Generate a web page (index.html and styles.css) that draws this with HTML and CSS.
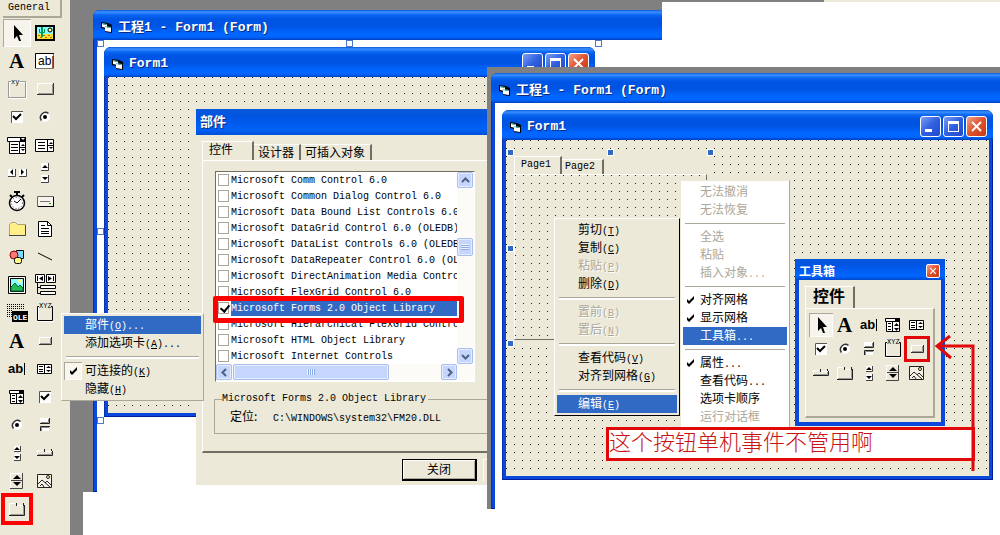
FILE: index.html
```html
<!DOCTYPE html>
<html lang="zh-CN">
<head>
<meta charset="utf-8">
<title>工程1 - Form1 (Form)</title>
<meta name="viewport" content="width=device-width">
<link rel="stylesheet" href="styles.css">
</head>
<body>
<svg class="sprite" aria-hidden="true">
	<symbol id="arrow" viewBox="0 0 24 24"><path d="M9 4v14l3-3 2 5h2l-2-6h4z"/></symbol>
	<symbol id="picture" viewBox="0 0 24 24"><path d="M2 4h20v16H2z"/><path fill="#8ff" d="M4 6h16v7H4z"/><path fill="#fd3" d="M4 13h16v5H4z"/><circle cx="17" cy="9" r="2" fill="#ff9" stroke="#000"/><path fill="none" stroke="#095" stroke-width="2" d="M9 6v10"/><path fill="none" stroke="#095" d="M6.5 8v3.5h5V8"/><path stroke="#a70" stroke-dasharray="2 3" d="M5 14.5h15M7 16.5h13"/></symbol>
	<symbol id="label" viewBox="0 0 24 24"><text x="4" y="19" class="glyph-serif">A</text></symbol>
	<symbol id="textbox" viewBox="0 0 24 24"><path fill="#fff" stroke="#777" d="M2.5 4.5h18v15h-18z"/><path fill="none" stroke="#000" d="M2.5 19V4.5H21"/><text x="5" y="16" class="glyph-ab">ab|</text></symbol>
	<symbol id="frame" viewBox="0 0 24 24"><path fill="none" stroke="#fff" d="M4.5 5.5h17v16h-17z"/><path fill="none" stroke="#999" d="M6 4.5H3.5v16h17v-16H15"/><text x="6" y="7" class="glyph-tiny">xy</text></symbol>
	<symbol id="button" viewBox="0 0 24 24"><path fill="#fff" d="M4 6h16v12H4z"/><path fill="#ece9d8" d="M5 7h14v10H5z"/><path fill="none" stroke="#999" d="M5 16.5h14.5V7"/><path fill="none" stroke="#333" d="M4 17.5h16.5V6"/></symbol>
	<symbol id="check" viewBox="0 0 24 24"><path fill="#fff" d="M6 6h12v12H6z"/><path fill="none" stroke="#555" d="M6.5 18V6.5H18"/><path fill="none" stroke="#000" stroke-width="2" d="M8 11l3 3 5-5"/></symbol>
	<symbol id="radio" viewBox="0 0 24 24"><circle cx="12" cy="12" r="5" fill="#fff"/><path fill="none" stroke="#333" stroke-width="1.5" d="M8.5 15.5a5 5 0 0 1 7-7"/><circle cx="12" cy="12" r="2"/></symbol>
	<symbol id="combo" viewBox="0 0 24 24"><path fill="#fff" stroke="#000" d="M2.5 4.5h18v4h-18zM4.500 8.5h16v12h-16z"/><path d="M15 4h6v4h-6z"/><path fill="#fff" d="M16 5h4l-2 2z"/><path stroke="#000" d="M6 11.5h7M6 14.5h7M6 17.5h7M14.5 9v12M15 14.5h6"/><path d="M16 13h4l-2-2zM16 16h4l-2 2z"/></symbol>
	<symbol id="list" viewBox="0 0 24 24"><path fill="#fff" stroke="#000" d="M2.5 6.5h18v12h-18z"/><path stroke="#000" d="M5 9.5h7M5 12.5h7M5 15.5h7M14.5 7v12M15 12.5h6"/><path d="M16 11h4l-2-2zM16 14h4l-2 2z"/></symbol>
	<symbol id="hscroll" viewBox="0 0 24 24"><path fill="#fff" d="M3 8h7v7H3zM14 8h7v7h-7z"/><path fill="none" stroke="#444" d="M10.5 8v7.5H3M21.5 8v7.5H14"/><path d="M8 8v6l-3-3zM16 8v6l3-3z"/></symbol>
	<symbol id="vscroll" viewBox="0 0 24 24"><path fill="#fff" d="M8 2h7v7H8zM8 14h7v7H8z"/><path fill="none" stroke="#444" d="M15.5 2v7.5H8M15.5 14v7.5H8"/><path d="M9 7h6l-3-3zM9 16h6l-3 3z"/></symbol>
	<symbol id="timer" viewBox="0 0 24 24"><circle cx="12" cy="14" r="7.5" fill="#fff" stroke="#000" stroke-width="1.5"/><path fill="none" stroke="#000" stroke-width="2" d="M9 3h6M12 3v4M5 6l2 2M19 6l-2 2"/><path fill="none" stroke="#000" d="M12 14l4-4M12 14l-3-2"/><circle cx="12" cy="14" r="5.5" fill="none" stroke="#444" stroke-dasharray="1 2"/></symbol>
	<symbol id="drive" viewBox="0 0 24 24"><path fill="#f6f4ea" stroke="#666" d="M4.5 7.5h16v10h-16z"/><path stroke="#000" d="M5 17.5h16M20.5 8v10"/><path stroke="#777" d="M7 12.5h10"/><path stroke="#0a0" d="M16 14.5h2"/></symbol>
	<symbol id="folder" viewBox="0 0 24 24"><path fill="#ffef86" stroke="#aaa178" d="M4.5 18.5v-11l2-2h4l2 2h8v11z"/><path fill="none" stroke="#444" d="M4 18.5h16.5V8"/></symbol>
	<symbol id="file" viewBox="0 0 24 24"><path fill="#fff" stroke="#000" d="M5.5 4.5h9l4 4v11h-13z"/><path fill="none" stroke="#000" d="M14.5 4v4.5H19M8 8.5h4M8 11.5h8M8 14.5h8M8 16.5h8"/></symbol>
	<symbol id="shape" viewBox="0 0 24 24"><path fill="#7df" stroke="#000" d="M11.5 5.5h7v8h-7z"/><circle cx="9" cy="10" r="4" fill="#f77" stroke="#800"/><rect x="9.5" y="12.5" width="7" height="6" rx="2" fill="#ff8" stroke="#000"/></symbol>
	<symbol id="line" viewBox="0 0 24 24"><path stroke="#000" d="M5 8l14 7"/></symbol>
	<symbol id="image" viewBox="0 0 24 24"><path fill="#fff" stroke="#000" d="M3.5 3.5h17v17h-17z"/><path fill="#8ff" stroke="#000" d="M5.5 5.5h13v13h-13z"/><path fill="#2b5" stroke="#063" d="M6 18v-4l4-4 3 4 2-2 3 3v3z"/><circle cx="15" cy="8" r="2" fill="#ff8"/></symbol>
	<symbol id="data" viewBox="0 0 24 24"><path fill="#fff" stroke="#000" d="M2.5 1.5h9v8h-9zM13.5 1.5h9v8h-9zM7.5 12.5h15v3h-15zM7.5 18.5h15v3h-15z"/><path fill="none" stroke="#000" d="M4.5 3v5M20.5 3v5M4.5 10v10.5H7M4.5 14.5H7"/><path d="M10 3v5L6 5.5zM15 3v5l4-2.5z"/></symbol>
	<symbol id="ole" viewBox="0 0 24 24"><path fill="none" stroke="#000" stroke-dasharray="1 1" d="M2 3.5h17M2 5.5h17M2 7.5h17M2 9.5h5M2 11.5h5M2 13.5h5M2 15.5h5"/><path d="M7 10h16v11H7z"/><text x="8" y="19" class="glyph-ole">OLE</text></symbol>
	<symbol id="xyz" viewBox="0 0 24 24"><path fill="none" stroke="#fff" d="M5.5 6v14M4 20.5h17"/><path fill="none" stroke="#000" d="M6 5.5H4.5v14h15v-14H18"/><text x="6" y="7" class="glyph-tiny">XYZ</text></symbol>
	<symbol id="btn" viewBox="0 0 24 24"><path fill="#fff" d="M6 8h12v8H6z"/><path fill="#ece9d8" d="M7 9h11v6H7z"/><path fill="none" stroke="#999" d="M7 14.5h10.5V9"/><path fill="none" stroke="#333" d="M6 15.5h12.5V8"/></symbol>
	<symbol id="ab" viewBox="0 0 24 24"><text x="3" y="16" class="glyph-abb">ab</text><path stroke="#000" d="M19.5 6v12"/></symbol>
	<symbol id="mlist" viewBox="0 0 24 24"><path fill="#fff" stroke="#000" d="M4.5 7.5h14v9h-14z"/><path stroke="#000" d="M6 9.5h4M6 12.5h4M6 14.5h4M11.5 8v9"/><path d="M13 11h5l-2.5-2zM13 13h5l-2.5 2z"/></symbol>
	<symbol id="mcombo" viewBox="0 0 24 24"><path fill="#fff" stroke="#000" d="M4.5 5.5h14v3h-14zM5.5 8.5h13v10h-13z"/><path d="M14 5h5v3h-5z"/><path stroke="#000" d="M7 10.5h3M7 13.5h3M7 16.5h3M11.5 9v9"/><path d="M13 13h5l-2.5-3zM13 15h5l-2.5 3z"/></symbol>
	<symbol id="toggle" viewBox="0 0 24 24"><path fill="#fff" d="M7 5h9v5H7zM7 13h9v5H7z"/><path fill="none" stroke="#222" d="M7 10.5h9.5V5M7.5 18v-4.500H17"/><path fill="none" stroke="#888" d="M8 9.5h7.5V6M8.5 18v-3.500H16"/></symbol>
	<symbol id="mscroll" viewBox="0 0 24 24"><path fill="#fff" d="M9 5h6v6H9zM9 13h6v6H9z"/><path fill="none" stroke="#444" d="M15.5 5v5.5H9M15.5 13v6.5H9"/><path d="M9 9h6l-3-3zM9 15h6l-3 3z"/></symbol>
	<symbol id="tabstrip" viewBox="0 0 24 24"><path fill="none" stroke="#fff" d="M4.5 14V9.5h6M12.5 10.5h6"/><path fill="none" stroke="#999" d="M5 13.5h13.5V11"/><path fill="none" stroke="#222" d="M4 14.5h15.5V10M11.5 8v3M18.5 8v2"/></symbol>
	<symbol id="spin" viewBox="0 0 24 24"><path fill="#fff" d="M5 4h12v15H5z"/><path fill="#ece9d8" d="M6 5h11v14H6z"/><path fill="none" stroke="#444" d="M5 19.5h12.5V4M6 11.5h11"/><path d="M8 10h8l-4-4zM8 13h8l-4 4z"/></symbol>
	<symbol id="mimage" viewBox="0 0 24 24"><path fill="#f4f2e6" stroke="#222" d="M4.5 5.5h14v13h-14z"/><path fill="none" stroke="#222" d="M5 15l4-4 8 7M12 14l2-2 4 4M7 17l2-2 2 3"/><circle cx="15" cy="8" r="1.5" fill="#ff8" stroke="#222"/></symbol>
	<symbol id="multipage" viewBox="0 0 24 24"><path fill="none" stroke="#fff" d="M4.5 18V6.5h6M12.5 8.5h6"/><path fill="none" stroke="#999" d="M5 17.5h13.5V9"/><path fill="none" stroke="#222" d="M4 18.5h15.5V8M11.5 6v3M18.5 6v3"/></symbol>
	<symbol id="vb" viewBox="0 0 12 12"><path fill="#000" d="M0 1l7 1 4 2v8l-7-1V8L0 7z"/><path fill="#fff" d="M1 3l5 1v3L1 6zM4 6l6 1v4l-6-1z"/><path fill="#5cc" d="M1 2l5 1v1L1 3zM4 5l6 1v1L4 6z"/></symbol>
	<symbol id="tick" viewBox="0 0 9 9"><path d="M1 3v3l2 2 5-5V0L3 5z"/></symbol>
	<symbol id="up" viewBox="0 0 9 9"><path fill="none" stroke="#4d6185" stroke-width="2" d="M1 6l3.5-3.500L8 6"/></symbol>
	<symbol id="down" viewBox="0 0 9 9"><path fill="none" stroke="#4d6185" stroke-width="2" d="M1 3l3.5 3.500L8 3"/></symbol>
	<symbol id="left" viewBox="0 0 9 9"><path fill="none" stroke="#4d6185" stroke-width="2" d="M6 1L2.5 4.500 6 8"/></symbol>
	<symbol id="right" viewBox="0 0 9 9"><path fill="none" stroke="#4d6185" stroke-width="2" d="M3 1l3.5 3.500L3 8"/></symbol>
	<symbol id="min" viewBox="0 0 19 19"><path fill="#fff" d="M4 12h7v3H4z"/></symbol>
	<symbol id="max" viewBox="0 0 19 19"><path fill="#fff" fill-rule="evenodd" d="M4 4h11v11H4zM5 7v7h9V7z"/></symbol>
	<symbol id="close" viewBox="0 0 19 19"><path fill="none" stroke="#fff" stroke-width="2" d="M5 5l9 9M14 5l-9 9"/></symbol>
</svg>

<main class="desktop">
	<div class="strip"><span></span></div>
	<div class="mdi"></div>

	<aside class="palette">
		<button class="general">General</button>
		<div class="tools">
			<button class="on" aria-label="Pointer"><svg><use href="#arrow"/></svg></button>
			<button aria-label="PictureBox"><svg><use href="#picture"/></svg></button>
			<button aria-label="Label"><svg><use href="#label"/></svg></button>
			<button aria-label="TextBox"><svg><use href="#textbox"/></svg></button>
			<button aria-label="Frame"><svg><use href="#frame"/></svg></button>
			<button aria-label="CommandButton"><svg><use href="#button"/></svg></button>
			<button aria-label="CheckBox"><svg><use href="#check"/></svg></button>
			<button aria-label="OptionButton"><svg><use href="#radio"/></svg></button>
			<button aria-label="ComboBox"><svg><use href="#combo"/></svg></button>
			<button aria-label="ListBox"><svg><use href="#list"/></svg></button>
			<button aria-label="HScrollBar"><svg><use href="#hscroll"/></svg></button>
			<button aria-label="VScrollBar"><svg><use href="#vscroll"/></svg></button>
			<button aria-label="Timer"><svg><use href="#timer"/></svg></button>
			<button aria-label="DriveListBox"><svg><use href="#drive"/></svg></button>
			<button aria-label="DirListBox"><svg><use href="#folder"/></svg></button>
			<button aria-label="FileListBox"><svg><use href="#file"/></svg></button>
			<button aria-label="Shape"><svg><use href="#shape"/></svg></button>
			<button aria-label="Line"><svg><use href="#line"/></svg></button>
			<button aria-label="Image"><svg><use href="#image"/></svg></button>
			<button aria-label="Data"><svg><use href="#data"/></svg></button>
			<button aria-label="OLE"><svg><use href="#ole"/></svg></button>
			<button aria-label="Forms Frame"><svg><use href="#xyz"/></svg></button>
			<button aria-label="Forms Label"><svg><use href="#label"/></svg></button>
			<button aria-label="Forms CommandButton"><svg><use href="#btn"/></svg></button>
			<button aria-label="Forms TextBox"><svg><use href="#ab"/></svg></button>
			<button aria-label="Forms ListBox"><svg><use href="#mlist"/></svg></button>
			<button aria-label="Forms ComboBox"><svg><use href="#mcombo"/></svg></button>
			<button aria-label="Forms CheckBox"><svg><use href="#check"/></svg></button>
			<button aria-label="Forms OptionButton"><svg><use href="#radio"/></svg></button>
			<button aria-label="Forms ToggleButton"><svg><use href="#toggle"/></svg></button>
			<button aria-label="Forms ScrollBar"><svg><use href="#mscroll"/></svg></button>
			<button aria-label="Forms TabStrip"><svg><use href="#tabstrip"/></svg></button>
			<button aria-label="Forms SpinButton"><svg><use href="#spin"/></svg></button>
			<button aria-label="Forms Image"><svg><use href="#mimage"/></svg></button>
			<button class="marked" aria-label="Forms MultiPage"><svg><use href="#multipage"/></svg></button>
		</div>
	</aside>

	<section class="window project-a">
		<header class="titlebar"><svg><use href="#vb"/></svg><h2><span class="cn">工程</span>1 - Form1 (Form)</h2></header>
		<div class="client"></div>
	</section>
	<section class="window form-a">
		<header class="titlebar">
			<svg><use href="#vb"/></svg><h2>Form1</h2>
			<button class="ctl" aria-label="最小化"><svg><use href="#min"/></svg></button>
			<button class="ctl" aria-label="最大化"><svg><use href="#max"/></svg></button>
			<button class="ctl red" aria-label="关闭窗体"><svg><use href="#close"/></svg></button>
		</header>
		<div class="client dots"></div>
		<i class="grip a1"></i><i class="grip a2"></i><i class="grip a3"></i><i class="grip a4"></i><i class="grip a5"></i>
	</section>

	<section class="dialog">
		<header class="caption">部件</header>
		<div class="dialog-body">
			<nav class="tabs">
				<button class="tab active">控件</button>
				<button class="tab">设计器</button>
				<button class="tab">可插入对象</button>
			</nav>
			<div class="sheet">
				<div class="listbox">
					<div class="rows">
						<label><input type="checkbox"><span>Microsoft Comm Control 6.0</span></label>
						<label><input type="checkbox"><span>Microsoft Common Dialog Control 6.0</span></label>
						<label><input type="checkbox"><span>Microsoft Data Bound List Controls 6.0</span></label>
						<label><input type="checkbox"><span>Microsoft DataGrid Control 6.0 (OLEDB)</span></label>
						<label><input type="checkbox"><span>Microsoft DataList Controls 6.0 (OLEDB)</span></label>
						<label><input type="checkbox"><span>Microsoft DataRepeater Control 6.0 (OLEDB)</span></label>
						<label><input type="checkbox"><span>Microsoft DirectAnimation Media Controls</span></label>
						<label><input type="checkbox"><span>Microsoft FlexGrid Control 6.0</span></label>
						<label class="selected"><input type="checkbox" checked><span>Microsoft Forms 2.0 Object Library</span></label>
						<label><input type="checkbox"><span>Microsoft Hierarchical FlexGrid Control</span></label>
						<label><input type="checkbox"><span>Microsoft HTML Object Library</span></label>
						<label><input type="checkbox"><span>Microsoft Internet Controls</span></label>
					</div>
					<div class="vbar">
						<button aria-label="向上"><svg><use href="#up"/></svg></button>
						<div class="thumb"></div>
						<button aria-label="向下"><svg><use href="#down"/></svg></button>
					</div>
					<div class="hbar">
						<button aria-label="向左"><svg><use href="#left"/></svg></button>
						<div class="thumb"></div>
						<button aria-label="向右"><svg><use href="#right"/></svg></button>
					</div>
				</div>
				<fieldset>
					<legend>Microsoft Forms 2.0 Object Library</legend>
					<span class="cn">定位:</span><span>C:\WINDOWS\system32\FM20.DLL</span>
				</fieldset>
			</div>
			<footer><button class="push">关闭</button><i class="next"></i></footer>
		</div>
		<i class="mark mark-row"></i>
	</section>

	<ul class="menu menu-palette">
		<li><button class="hot">部件<span>(<u>O</u>)...</span></button></li>
		<li><button>添加选项卡<span>(<u>A</u>)...</span></button></li>
		<li class="sep"></li>
		<li><button><i class="boxed"><svg><use href="#tick"/></svg></i>可连接的<span>(<u>K</u>)</span></button></li>
		<li><button>隐藏<span>(<u>H</u>)</span></button></li>
	</ul>

	<div class="backdrop"></div>
	<section class="window project-b">
		<header class="titlebar"><svg><use href="#vb"/></svg><h2><span class="cn">工程</span>1 - Form1 (Form)</h2></header>
		<div class="client"></div>
	</section>
	<section class="window form-b">
		<header class="titlebar">
			<svg><use href="#vb"/></svg><h2>Form1</h2>
			<button class="ctl" aria-label="最小化"><svg><use href="#min"/></svg></button>
			<button class="ctl" aria-label="最大化"><svg><use href="#max"/></svg></button>
			<button class="ctl red" aria-label="关闭窗体"><svg><use href="#close"/></svg></button>
		</header>
		<div class="client dots">
			<div class="multipage">
				<nav class="tabs">
					<button class="tab active">Page1</button>
					<button class="tab">Page2</button>
				</nav>
				<div class="page dots"></div>
				<i class="knob b1"></i><i class="knob b2"></i><i class="knob b3"></i><i class="knob b4"></i><i class="knob b5"></i>
			</div>
		</div>
	</section>

	<ul class="menu menu-control">
		<li><button>剪切<span>(<u>T</u>)</span></button></li>
		<li><button>复制<span>(<u>C</u>)</span></button></li>
		<li><button disabled>粘贴<span>(<u>P</u>)</span></button></li>
		<li><button>删除<span>(<u>D</u>)</span></button></li>
		<li class="sep"></li>
		<li><button disabled>置前<span>(<u>B</u>)</span></button></li>
		<li><button disabled>置后<span>(<u>N</u>)</span></button></li>
		<li class="sep"></li>
		<li><button>查看代码<span>(<u>V</u>)</span></button></li>
		<li><button>对齐到网格<span>(<u>G</u>)</span></button></li>
		<li class="sep"></li>
		<li><button class="hot">编辑<span>(<u>E</u>)</span></button></li>
	</ul>

	<ul class="menu menu-edit">
		<li><button disabled>无法撤消</button></li>
		<li><button disabled>无法恢复</button></li>
		<li class="sep"></li>
		<li><button disabled>全选</button></li>
		<li><button disabled>粘贴</button></li>
		<li><button disabled>插入对象<span>...</span></button></li>
		<li class="sep"></li>
		<li><button><i><svg><use href="#tick"/></svg></i>对齐网格</button></li>
		<li><button><i><svg><use href="#tick"/></svg></i>显示网格</button></li>
		<li><button class="hot">工具箱<span>...</span></button></li>
		<li class="sep"></li>
		<li><button><i><svg><use href="#tick"/></svg></i>属性<span>...</span></button></li>
		<li><button>查看代码<span>...</span></button></li>
		<li><button>选项卡顺序</button></li>
		<li><button disabled>运行对话框</button></li>
	</ul>

	<section class="toolbox">
		<header>工具箱<button class="ctl red small" aria-label="关闭工具箱"><svg><use href="#close"/></svg></button></header>
		<div class="toolbox-body">
			<button class="tab active">控件</button>
			<div class="tools">
				<button class="on" aria-label="选定对象"><svg><use href="#arrow"/></svg></button>
				<button aria-label="标签"><svg><use href="#label"/></svg></button>
				<button aria-label="文本框"><svg><use href="#ab"/></svg></button>
				<button aria-label="复合框"><svg><use href="#mcombo"/></svg></button>
				<button aria-label="列表框"><svg><use href="#mlist"/></svg></button>
				<button aria-label="复选框"><svg><use href="#check"/></svg></button>
				<button aria-label="选项按钮"><svg><use href="#radio"/></svg></button>
				<button aria-label="切换按钮"><svg><use href="#toggle"/></svg></button>
				<button aria-label="框架"><svg><use href="#xyz"/></svg></button>
				<button class="marked" aria-label="命令按钮"><svg><use href="#btn"/></svg></button>
				<button aria-label="TabStrip"><svg><use href="#tabstrip"/></svg></button>
				<button aria-label="多页"><svg><use href="#multipage"/></svg></button>
				<button aria-label="滚动条"><svg><use href="#mscroll"/></svg></button>
				<button aria-label="旋转按钮"><svg><use href="#spin"/></svg></button>
				<button aria-label="图像"><svg><use href="#mimage"/></svg></button>
			</div>
		</div>
	</section>

	<p class="note">这个按钮单机事件不管用啊</p>
	<svg class="pointer" viewBox="0 0 42 138" aria-hidden="true"><path d="M2 11h36v125M15 1L2 11l14 12"/></svg>
</main>
</body>
</html>
```
FILE: styles.css
```css
:root {
	--face:#ece9d8;
	--shade:#aca899;
	--dark:#716f64;
	--blue:#0a48dc;
	--hot:#316ac5;
	--red:#e00808;
	--cn:"Noto Sans CJK SC", sans-serif;
	--mono:"Liberation Mono", "Noto Sans CJK SC", monospace;
}
* {
	box-sizing:border-box;
}
body {
	margin:0;
	background:#fff;
	color:#000;
	font:12px/18px var(--cn);
	overflow:hidden;
}
button {
	margin:0;
	padding:0;
	border:0;
	background:none;
	color:inherit;
	font:inherit;
}
ul {
	margin:0;
	padding:0;
	list-style:none;
}
.sprite {
	display:none;
}
.glyph-serif {
	font:bold 21px "Liberation Serif", serif;
}
.glyph-ab {
	font:12px "Liberation Sans", sans-serif;
}
.glyph-abb {
	font:bold 13px "Liberation Sans", sans-serif;
}
.glyph-tiny {
	font:7px "Liberation Mono", monospace;
}
.glyph-ole {
	font:bold 8px "Liberation Mono", monospace;
	fill:#fff;
}
.desktop {
	position:relative;
	min-height:100vh;
}
.strip {
	position:absolute;
	top:0;
	left:0;
	right:0;
	height:2px;
	background:var(--face);
}
.strip span {
	display:block;
	width:824px;
	height:2px;
	background:#808080;
}
.mdi {
	position:absolute;
	top:0;
	left:70px;
	width:592px;
	height:492px;
	background:#808080;
}

/* toolbox on the left */
.palette {
	position:absolute;
	top:0;
	bottom:0;
	left:0;
	width:83px;
	padding-left:3px;
	background:var(--face);
	border-right:13px solid #808080;
}
.general {
	display:block;
	width:59px;
	height:18px;
	padding-right:5px;
	border-right:2px solid var(--shade);
	border-bottom:2px solid var(--shade);
	font:10px/16px var(--mono);
}
.tools {
	display:grid;
}
.palette .tools {
	margin-top:1px;
	grid-template-columns:28px 28px;
	grid-auto-rows:28px;
}
.tools button {
	display:grid;
	place-items:center;
}
.tools svg {
	width:24px;
	height:24px;
}
.on {
	background:#f6f4ec;
	box-shadow:inset 1px 1px var(--shade), inset -1px -1px #fff;
}
.palette .marked {
	outline:4px solid #f00;
	outline-offset:-2px;
}

/* windows */
.window {
	position:absolute;
	display:flex;
	flex-direction:column;
	padding:0 4px 4px;
	background:var(--blue);
	box-shadow:inset 1px 0 #0831b0, inset -1px -1px #001f9c;
	border-radius:7px 7px 0 0;
}
.titlebar {
	display:flex;
	align-items:center;
	flex:none;
	gap:2px;
	height:30px;
	margin:0 -4px;
	padding:3px 6px 0 8px;
	background:linear-gradient(#0a58d8, #3a90ff 2px, #0a66f2 5px, #0054e3 9px, #0054e3 16px, #0066ff 23px, #0066ff 27px, #0040c0);
	border-radius:7px 7px 0 0;
	color:#fff;
}
.titlebar > svg {
	width:12px;
	height:12px;
	margin-right:3px;
}
.titlebar h2 {
	flex:1;
	margin:0;
	font:bold 13px/20px var(--mono);
	text-shadow:1px 1px #0a2a80;
	white-space:nowrap;
}
.client {
	flex:1;
	background:#fff;
}
.dots {
	background:conic-gradient(from 90deg at 7px 7px, #222 90deg, var(--face) 0) 1px 1px/8px 8px;
}
.ctl {
	width:21px;
	height:21px;
	border:1px solid #fff;
	border-radius:3px;
	background:linear-gradient(135deg, #7d9df5, #2f5fe0 50%, #2448cc);
}
.ctl svg {
	display:block;
	width:100%;
	height:100%;
}
.ctl.red {
	background:linear-gradient(135deg, #f0a08c, #e0512c 50%, #c83a12);
}
.ctl.small {
	width:14px;
	height:14px;
	border-radius:2px;
}
.project-a {
	top:10px;
	left:93px;
	width:569px;
	height:482px;
	padding:0 0 0 4px;
	border-top-right-radius:0;
}
.project-a .titlebar {
	margin-right:0;
	border-top-right-radius:0;
}
.form-a {
	top:47px;
	left:104px;
	width:491px;
	height:370px;
}
.backdrop {
	position:absolute;
	top:67px;
	left:487px;
	right:0;
	height:442px;
	background:linear-gradient(#808080 12px, transparent 0), linear-gradient(90deg, #808080 12px, #fff 0);
}
.project-b {
	top:73px;
	left:491px;
	right:0;
	height:436px;
	padding:0 0 0 4px;
	border-top-right-radius:0;
}
.project-b .titlebar {
	margin-right:0;
	border-top-right-radius:0;
}
.form-b {
	top:110px;
	left:502px;
	right:7px;
	height:370px;
}

/* selection grips round the form */
.grip {
	position:absolute;
	width:7px;
	height:7px;
	background:#fff;
	border:1px solid #4a7ac8;
}
.a1 { top:-7px; left:-7px; }
.a2 { top:-7px; left:242px; }
.a3 { top:-7px; right:-7px; }
.a4 { top:181px; left:-7px; }
.a5 { bottom:-7px; left:-7px; }
.knob {
	position:absolute;
	width:7px;
	height:7px;
	background:var(--hot);
	border:1px solid #fff;
}
.b1 { top:-3px; left:-3px; }
.b2 { top:-3px; left:97px; }
.b3 { top:-3px; right:-3px; }
.b4 { top:93px; left:-3px; }
.b5 { bottom:-3px; left:-3px; }

/* tabs */
.tabs {
	display:flex;
	align-items:flex-end;
}
.tab {
	height:16px;
	padding:0 6px;
	border-top:1px solid #fff;
	border-right:2px solid var(--dark);
	line-height:14px;
	white-space:nowrap;
}
.tab.active {
	border-left:1px solid #fff;
	text-align:left;
}

/* components dialog */
.dialog {
	position:absolute;
	top:109px;
	left:196px;
	width:291px;
	background:var(--face);
	overflow:hidden;
}
.caption {
	height:26px;
	padding-left:4px;
	background:linear-gradient(#0a58d8, #0054e3 8px, #0062f8 20px, #0050d8);
	color:#fff;
	font:bold 13px/24px var(--cn);
	text-shadow:1px 1px #0a2a80;
}
.dialog-body {
	padding:6px 0 4px 6px;
}
.dialog .tab {
	padding:0 5px 2px 4px;
}
.dialog .tab.active {
	width:52px;
	height:19px;
	padding:0 6px 4px;
}
.sheet {
	height:293px;
	padding:10px 0 0 12px;
	border:solid;
	border-width:1px 0 2px 1px;
	border-color:#fff #fff var(--dark) #fff;
}
.listbox {
	display:grid;
	grid-template:192px 17px / 1fr 17px;
	width:260px;
	border:1px solid var(--dark);
	border-right-color:#fff;
	border-bottom-color:#fff;
	background:#fcfbf8;
}
.rows {
	overflow:hidden;
	background:#fff;
}
.rows label {
	display:flex;
	align-items:center;
	height:16px;
	padding-left:2px;
	font:10px/15px var(--mono);
	white-space:nowrap;
}
.rows input {
	flex:none;
	appearance:none;
	position:relative;
	width:11px;
	height:12px;
	margin:0 2px 0 0;
	border:1px solid #a8a698;
	background:#fff;
}
.rows input:checked:after {
	content:'';
	position:absolute;
	top:0;
	left:3px;
	width:4px;
	height:7px;
	border:solid #000;
	border-width:0 2px 2px 0;
	transform:rotate(40deg);
}
.rows span {
	flex:1;
	padding-top:1px;
}
.selected span {
	background:var(--hot);
	color:#fff;
}
.vbar,
.hbar {
	display:flex;
	justify-content:space-between;
}
.vbar {
	flex-direction:column;
}
.vbar button,
.hbar button,
.thumb {
	display:grid;
	place-items:center;
	width:16px;
	height:16px;
	border:1px solid #a9bfee;
	border-radius:2px;
	background:#c6d5fc;
	box-shadow:inset 0 0 0 1px #e4ecff;
}
.vbar svg,
.hbar svg {
	width:9px;
	height:9px;
}
.vbar .thumb {
	height:18px;
	margin-bottom:42px;
}
.hbar .thumb {
	width:156px;
	margin-right:52px;
}
.thumb:after {
	content:'';
	width:8px;
	height:6px;
	background:repeating-linear-gradient(#eef4ff 0 1px, #8caae6 1px 2px);
}
.hbar .thumb:after {
	background:repeating-linear-gradient(90deg, #eef4ff 0 1px, #8caae6 1px 2px);
}
fieldset {
	min-width:0;
	height:42px;
	margin:10px -2px 0 -1px;
	padding:3px 0 0 15px;
	border:1px solid var(--shade);
	font:10px/14px var(--mono);
	white-space:nowrap;
}
legend {
	margin-left:-8px;
	padding:0 2px 0 0;
}
.cn {
	font-family:var(--cn);
}
fieldset .cn {
	display:inline-block;
	width:43px;
	font-size:12px;
}
footer {
	display:flex;
	justify-content:flex-end;
	gap:6px;
	margin-top:6px;
}
.push {
	width:75px;
	height:22px;
	padding-bottom:2px;
	border:1px solid #000;
	border-right-width:2px;
	border-bottom-width:2px;
	box-shadow:inset 1px 1px #fff, inset -1px -1px var(--shade);
}
.next {
	width:4px;
	height:22px;
	border:solid #fff;
	border-width:1px 0 0 1px;
}
.mark {
	position:absolute;
	border:5px solid #f00;
	border-radius:2px;
}
.mark-row {
	top:187px;
	left:17px;
	width:251px;
	height:27px;
}

/* menus */
.menu {
	position:absolute;
	padding:2px;
	border:1px solid #fff;
	background:var(--face);
	white-space:nowrap;
}
.menu button {
	display:block;
	position:relative;
	width:100%;
	height:18px;
	padding:0 0 2px 21px;
	line-height:16px;
	text-align:left;
}
.menu span {
	font:10px/16px var(--mono);
}
.menu button:disabled {
	color:var(--shade);
}
.menu .hot {
	background:var(--hot);
	color:#fff;
}
.menu i {
	position:absolute;
	top:0;
	left:0;
	width:18px;
	height:18px;
	display:grid;
	place-items:center;
}
.menu i svg {
	width:9px;
	height:9px;
}
.menu .boxed {
	background:#f8f6ee;
	box-shadow:inset 1px 1px var(--shade), inset -1px -1px #fff;
}
.sep {
	height:10px;
	padding:4px 2px;
}
.sep:before {
	content:'';
	display:block;
	height:2px;
	border-top:1px solid var(--shade);
	background:#fff;
}
.menu-palette {
	top:313px;
	left:61px;
	width:143px;
	border-right-color:var(--shade);
	border-bottom-color:var(--shade);
}
.menu-control {
	top:218px;
	left:554px;
	width:126px;
	border-right-color:#000;
	border-bottom-color:#000;
}
.menu-control button:disabled {
	text-shadow:1px 1px #fff;
}
.menu-edit {
	top:180px;
	left:680px;
	width:110px;
	background:#fff;
	border-color:var(--face) var(--shade) #fff var(--face);
}
.menu-edit button {
	padding-left:17px;
}
.menu-edit i {
	width:14px;
}
.menu-edit .sep {
	height:9px;
}

/* multi page control on the form */
.form-b .client {
	position:relative;
}
.multipage {
	position:absolute;
	top:12px;
	left:4px;
	width:201px;
	height:192px;
	padding:4px;
	background:var(--face);
}
.multipage .tabs {
	height:18px;
	font:10px/14px var(--mono);
}
.multipage .tab {
	width:42px;
	height:15px;
	padding:0 3px;
	text-align:left;
}
.multipage .tab.active {
	width:48px;
	height:18px;
	padding:0 6px 1px;
}
.page {
	height:166px;
	border:1px solid #fff;
	border-right-color:var(--dark);
	border-bottom-color:var(--dark);
}

/* controls toolbox */
.toolbox {
	position:absolute;
	top:259px;
	left:795px;
	width:150px;
	padding:0 4px 4px;
	background:var(--blue);
}
.toolbox header {
	display:flex;
	align-items:center;
	justify-content:space-between;
	height:21px;
	margin:0 -4px;
	padding:2px 5px 0 4px;
	background:linear-gradient(#0a58d8, #0054e3 6px, #0066ff 17px, #0048cc);
	color:#fff;
	font-weight:bold;
}
.toolbox-body {
	height:142px;
	padding:6px;
	background:var(--face);
}
.toolbox .tab {
	display:block;
	width:50px;
	height:22px;
	padding:0 7px 5px;
	font:bold 16px/16px var(--cn);
}
.toolbox .tools {
	height:110px;
	padding:4px 3px;
	grid-template-columns:repeat(5, 24px);
	grid-auto-rows:24px;
	align-content:start;
	border:1px solid #fff;
	border-right:2px solid var(--shade);
	border-bottom:2px solid var(--shade);
}
.toolbox .marked {
	outline:3px solid var(--red);
	outline-offset:-2px;
}

/* remark under the form */
.note {
	position:absolute;
	top:427px;
	left:606px;
	right:25px;
	height:34px;
	margin:0;
	border:3px solid var(--red);
	background:#fff;
	color:#c81414;
	font:300 22px/20px var(--cn);
	white-space:nowrap;
}
.pointer {
	position:absolute;
	top:335px;
	right:23px;
	width:42px;
	height:138px;
	fill:none;
	stroke:var(--red);
	stroke-width:3;
}
```
